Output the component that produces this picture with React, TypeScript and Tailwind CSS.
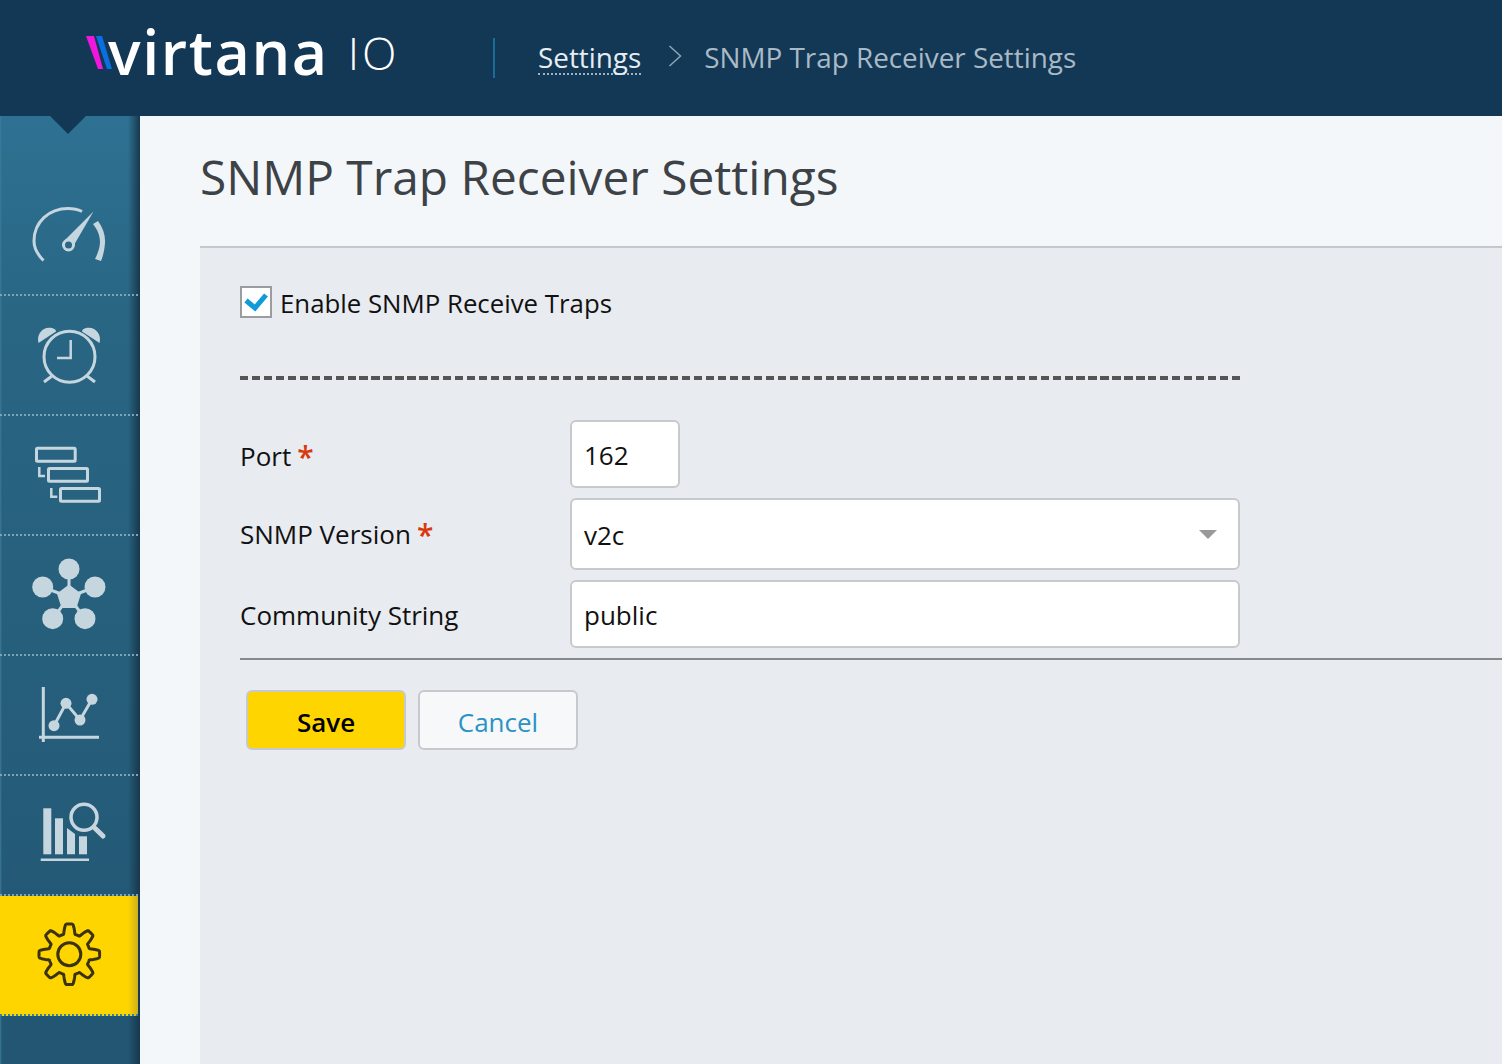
import type { ReactNode } from 'react';

const ink = '#c6d6df';

function NavIcon({ children }: { children: ReactNode }) {
  return (
    <svg width="80" height="80" viewBox="0 0 80 80" fill="none" stroke={ink} className="-ml-[2px]">
      {children}
    </svg>
  );
}

function gearPath(cx: number, cy: number) {
  const pts: string[] = [];
  const n = 240;
  for (let i = 0; i < n; i++) {
    const a = (i / n) * Math.PI * 2;
    const c = Math.cos(a * 8);
    const s = Math.max(-1, Math.min(1, c * 1.7));
    const r = 25.5 + 4.8 * s;
    pts.push(`${(cx + r * Math.sin(a)).toFixed(2)} ${(cy - r * Math.cos(a)).toFixed(2)}`);
  }
  return `M${pts.join('L')}Z`;
}

const items: ReactNode[] = [
  <NavIcon key="gauge">
    <path d="M14.500 65.500C9 60 5 53 5 46 5 27 20 13.500 39 13.500 44 13.500 49 14.500 53 16.500" strokeWidth="3" />
    <path d="M64 29 69 26C74 33 76.500 40 76 48 75.500 54 74.500 60 72 66L66 64C69 58 71 52 71 47 71 40 68 34 64 29Z" fill={ink} stroke="none" />
    <path d="M64.500 16.500 45 50 36 45Z" fill={ink} stroke="none" />
    <circle cx="39.500" cy="50" r="5" strokeWidth="3" fill="#2a6685" />
  </NavIcon>,
  <NavIcon key="alarm">
    <circle cx="40.500" cy="41.700" r="25.500" strokeWidth="3" />
    <path d="M41.700 25V43H28" strokeWidth="2.500" />
    <path d="M9.500 28C7 19 14 11 23 13 26 14 27 15 27 16.500Z" fill={ink} stroke="none" />
    <path d="M70.500 28C73 19 66 11 57 13 54 14 53 15 53 16.500Z" fill={ink} stroke="none" />
    <path d="M15 67 23 61M66 67 58 61" strokeWidth="3" />
  </NavIcon>,
  <NavIcon key="gantt">
    <g strokeWidth="3">
      <rect x="7.500" y="13.200" width="38.700" height="13" rx="1" />
      <rect x="19.500" y="33.500" width="39" height="12.700" rx="1" />
      <rect x="31.500" y="53.500" width="39" height="12.700" rx="1" />
    </g>
    <path d="M10.300 32V41H16M22.300 53V61.700H28.300" strokeWidth="2.500" />
  </NavIcon>,
  <NavIcon key="network">
    <g fill={ink} stroke="none">
      <circle cx="40" cy="14" r="10.500" />
      <circle cx="13.700" cy="32" r="10.500" />
      <circle cx="66" cy="32" r="10.500" />
      <circle cx="23.700" cy="63.700" r="10.500" />
      <circle cx="56" cy="63.700" r="10.500" />
      <path d="M40 29.500 52 38.500 47.500 53H32.500L28 38.500Z" />
    </g>
    <path d="M40 14V42L13.700 32M40 42 66 32M40 42 23.700 63.700M40 42 56 63.700" strokeWidth="3" />
  </NavIcon>,
  <NavIcon key="chart">
    <path d="M14.300 12V67M10 62.300H70" strokeWidth="3" />
    <path d="M25 50.700 37 28.300 51 45 63 24.300" strokeWidth="3" />
    <g fill={ink} stroke="none">
      <circle cx="25" cy="50.700" r="5.500" />
      <circle cx="37" cy="28.300" r="5.500" />
      <circle cx="51" cy="45" r="5.500" />
      <circle cx="63" cy="24.300" r="5.500" />
    </g>
  </NavIcon>,
  <NavIcon key="search">
    <g fill={ink} stroke="none">
      <rect x="14.300" y="13.300" width="8" height="46" />
      <rect x="26" y="23.300" width="8" height="36" />
      <path d="M38 33 46 39V59.300H38Z" />
      <rect x="50" y="41.300" width="8" height="18" />
    </g>
    <path d="M11.700 64.800H60" strokeWidth="2.500" />
    <circle cx="55" cy="22.300" r="13" strokeWidth="3.500" />
    <path d="M66 33.300 74 41" strokeWidth="5" strokeLinecap="round" />
  </NavIcon>,
];

function Req() {
  return <span className="relative top-[2px] ml-[6px] text-[30px] font-semibold leading-none text-[#d8380c]">*</span>;
}

export default function App() {
  return (
    <div className="flex h-screen min-h-[1064px] flex-col overflow-hidden bg-[#f4f7fa] font-['Open_Sans',sans-serif] text-[#111]">
      <header className="flex h-[116px] shrink-0 items-center bg-[#133855]">
        <div className="flex w-[493px] shrink-0 items-center pl-[86px]">
          <svg width="27" height="34" viewBox="0 0 27 34" className="mt-[-10px] shrink-0">
            <path d="M0 0H8L17 33H12Z" fill="#f016dc" />
            <path d="M10 0H16L26 33H21Z" fill="#0a6fe0" />
          </svg>
          <span className="ml-[-5px] mt-[-14px] text-[61px] font-semibold leading-none tracking-[1.6px] text-white">virtana</span>
          <span className="ml-[19px] mt-[-12px] text-[45px] font-light leading-none tracking-[3px] text-white">IO</span>
        </div>
        <div className="h-10 w-0.5 shrink-0 bg-[#1a6d96]" />
        <nav className="ml-[43px] flex items-center text-[27.85px] leading-[38px]">
          <span className="border-b-2 border-dotted border-[#9fb4c2] leading-[32px] text-[#e6edf2]">Settings</span>
          <svg width="14" height="24" viewBox="0 0 14 24" className="ml-[27px] mr-[22px] -mt-1" fill="none" stroke="#8da4b4" strokeWidth="1.500">
            <path d="M1.500 2 12.500 12 1.500 22" />
          </svg>
          <span className="-mt-0.5 text-[#a9bac7]">SNMP Trap Receiver Settings</span>
        </nav>
      </header>
      <div className="flex min-h-0 flex-1">
        <aside className="relative w-[140px] shrink-0 bg-[linear-gradient(90deg,#3c7a99_0,transparent_2px,transparent_128px,#17384c_140px),linear-gradient(180deg,#2e7192_0,#296684_200px,#225672_100%)] pt-[60px]">
          <div className="absolute left-[50px] top-0 h-0 w-0 border-x-[18px] border-t-[18px] border-x-transparent border-t-[#133855]" />
          {items.map(icon => (
            <div key={(icon as { key: string }).key} className="flex h-[120px] w-[138px] items-center justify-center border-b-2 border-dotted border-[#7ea3b7]">
              <div className="ml-px flex">{icon}</div>
            </div>
          ))}
          <div className="flex h-[120px] w-[138px] items-center justify-center border-b-2 border-dotted border-[#2f7fb0] bg-[linear-gradient(90deg,#ffd500_0,#ffd500_128px,#cfb01c_138px)]">
            <svg width="80" height="80" viewBox="0 0 80 80" fill="none" stroke="#3b3210" strokeWidth="3">
              <path d={gearPath(40.3, 39.3)} strokeLinejoin="round" />
              <circle cx="40.3" cy="39.3" r="11.500" />
            </svg>
          </div>
        </aside>
        <main className="flex min-w-0 flex-1 flex-col pl-[60px]">
          <h1 className="flex h-[132px] shrink-0 items-center border-b-2 border-[#c4c8cc] pb-[9px] text-[47.8px] font-normal text-[#3d4247]">
            SNMP Trap Receiver Settings
          </h1>
          <section className="flex-1 bg-[#e8ebf0] pl-10 pt-[38px]">
            <label className="flex h-8 items-center gap-2">
              <span className="flex size-8 items-center justify-center border-2 border-[#9a9c9f] bg-white">
                <svg width="24" height="20" viewBox="0 0 24 20" fill="none" stroke="#0f9ad8" strokeWidth="5">
                  <path d="M2 8.500 11 16 22 3" />
                </svg>
              </span>
              <span className="h-8 pt-0.5 text-[25.8px] leading-[30px]">Enable SNMP Receive Traps</span>
            </label>
            <div className="mt-[58px] h-1 w-[1000px] bg-[repeating-linear-gradient(90deg,#555_0,#555_8.300px,transparent_8.300px,transparent_11.950px)]" />
            <div className="mt-10 flex h-[68px] items-center">
              <div className="w-[330px] pt-1 text-[26px]">Port<Req /></div>
              <input readOnly value="162" className="h-full w-[110px] rounded-md border-2 border-[#c6cacd] bg-white px-3 pt-0.5 text-[26px] outline-none" />
            </div>
            <div className="mt-2.5 flex h-[72px] items-center">
              <div className="w-[330px] text-[26px]">SNMP Version<Req /></div>
              <div className="flex h-full w-[670px] items-center justify-between rounded-md border-2 border-[#c6cacd] bg-white pl-3 pr-[21px] pt-0.5 text-[26px]">
                v2c
                <span className="-mt-0.5 h-0 w-0 border-x-[9px] border-t-[9px] border-x-transparent border-t-[#999]" />
              </div>
            </div>
            <div className="mt-2.5 flex h-[68px] items-center">
              <div className="w-[330px] pt-0.5 text-[26px]">Community String</div>
              <input readOnly value="public" className="h-full w-[670px] rounded-md border-2 border-[#c6cacd] bg-white px-3 pt-0.5 text-[26px] outline-none" />
            </div>
            <div className="mt-2.5 h-0.5 bg-[#88898d]" />
            <div className="ml-1.5 mt-[30px] flex gap-3">
              <button type="button" className="h-[60px] w-40 rounded-md border-2 border-[#c6cacd] bg-[#ffd500] pt-1 text-[26px] font-semibold text-black">Save</button>
              <button type="button" className="h-[60px] w-40 rounded-md border-2 border-[#c6cacd] bg-[#f7f8f9] pt-1 text-[26px] text-[#2a93c4]">Cancel</button>
            </div>
          </section>
        </main>
      </div>
    </div>
  );
}
